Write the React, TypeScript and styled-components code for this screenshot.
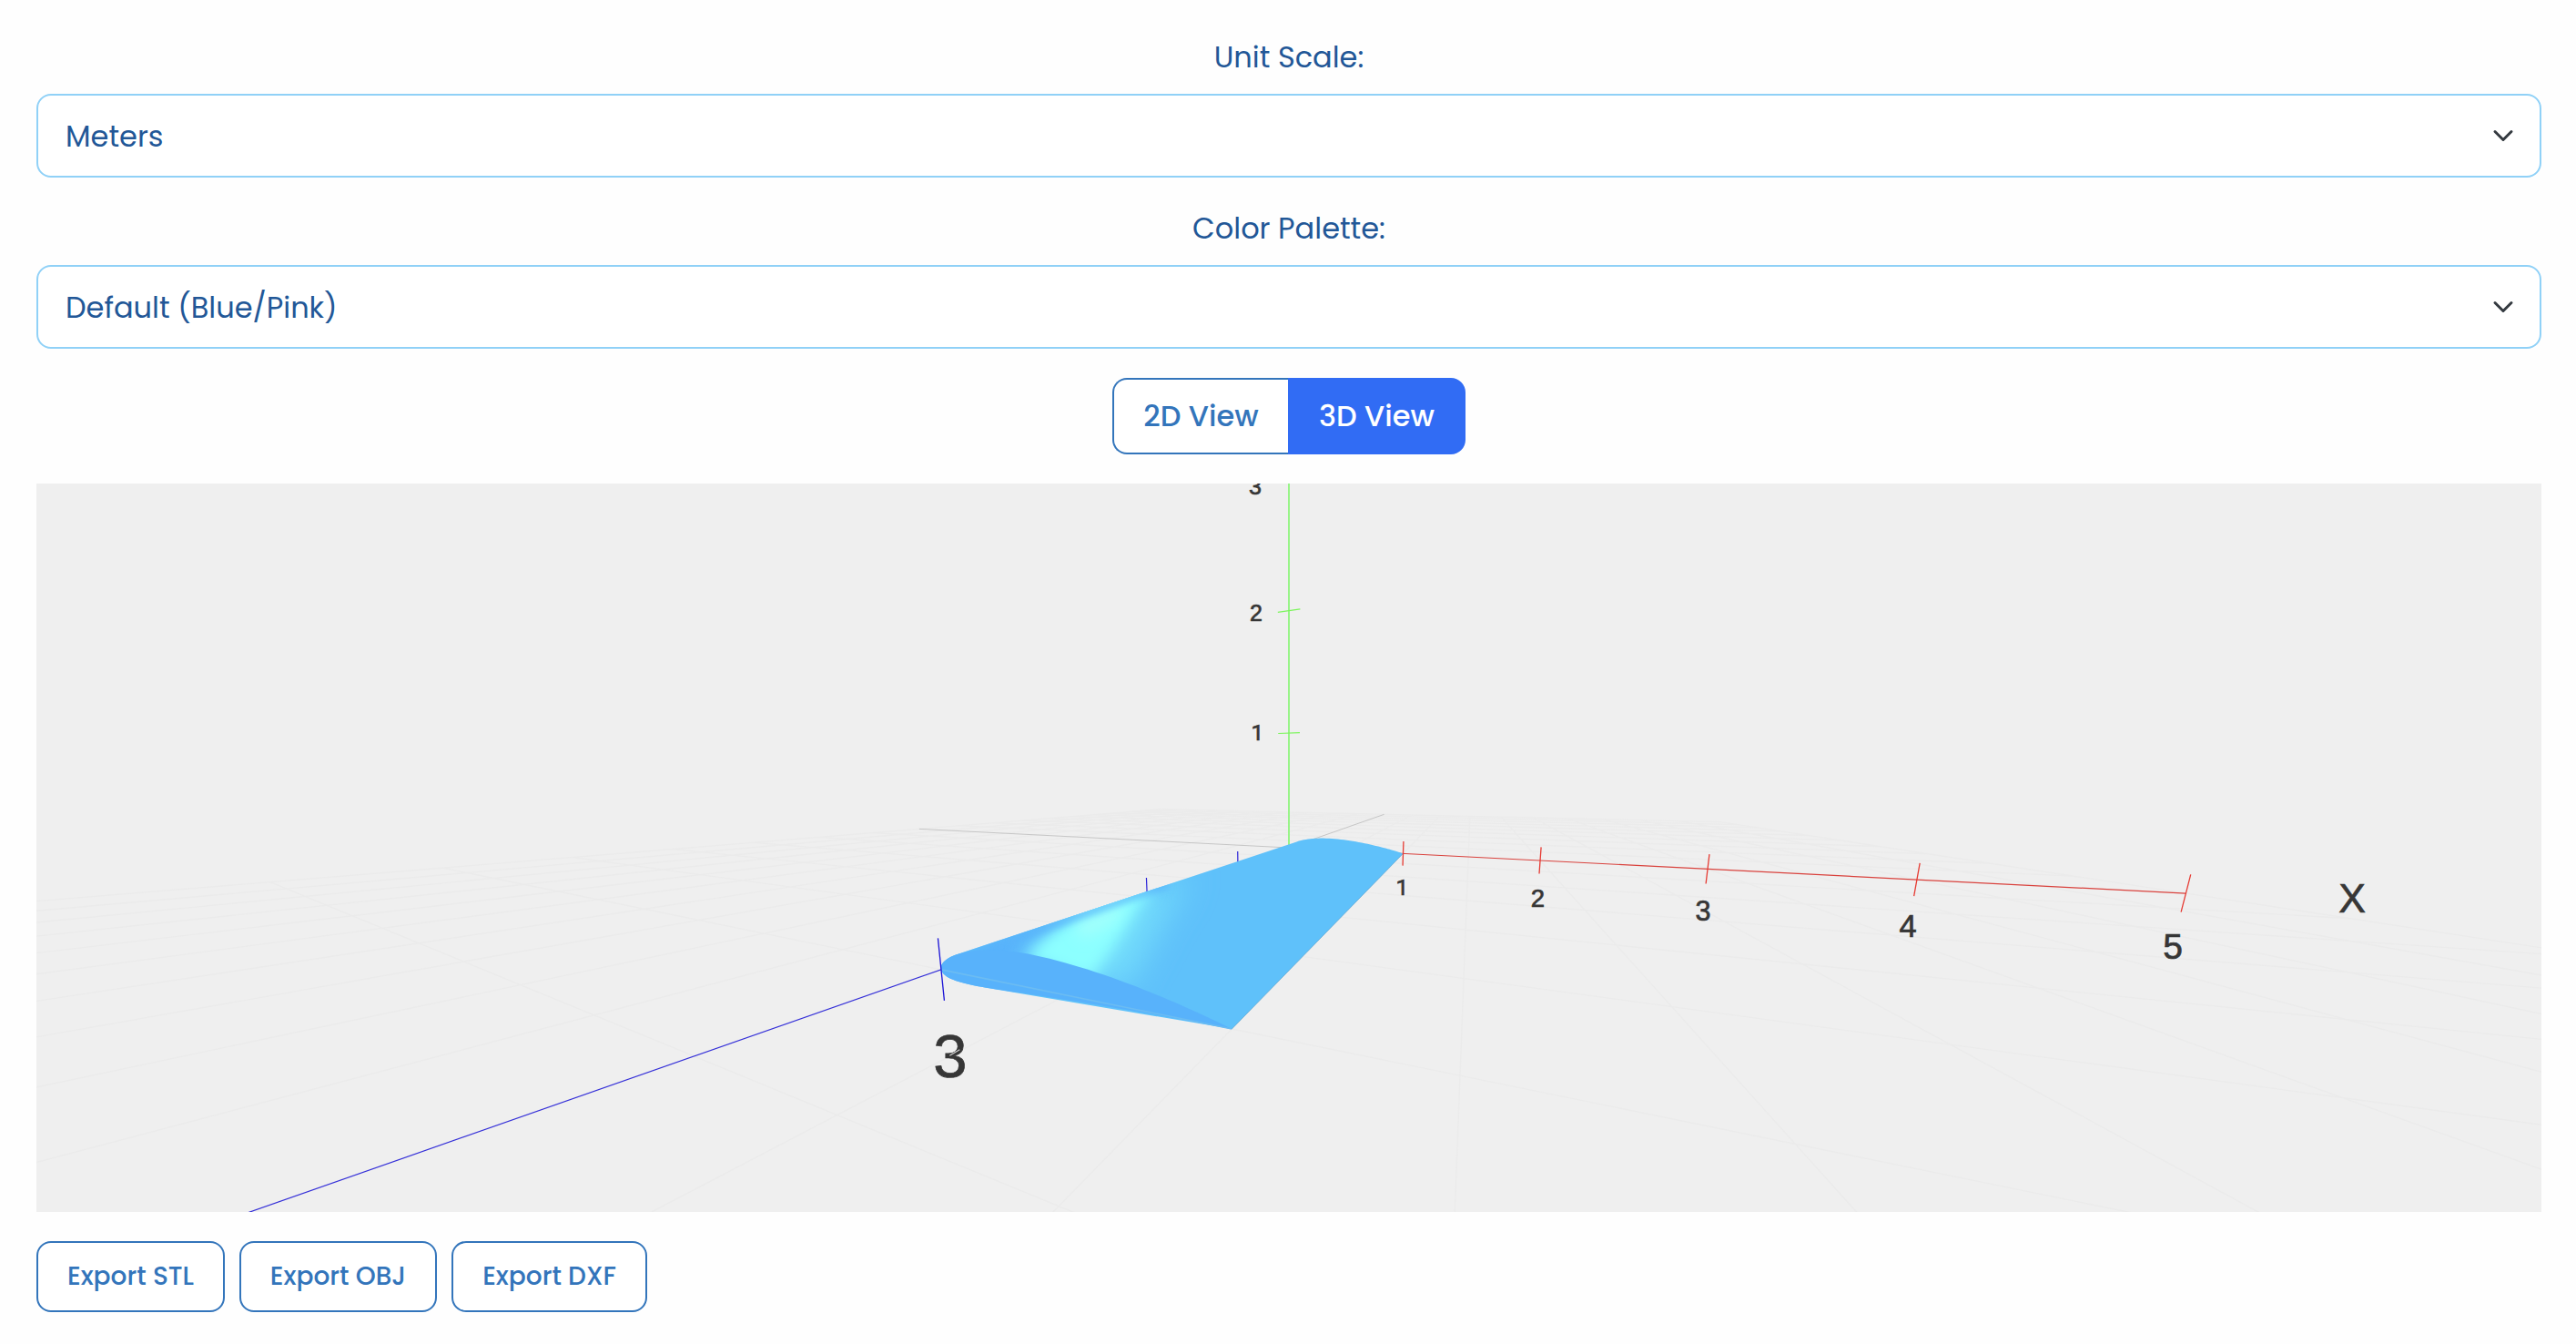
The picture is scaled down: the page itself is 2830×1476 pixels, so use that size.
import React from "react";
import styled, { createGlobalStyle } from "styled-components";

const GlobalStyle = createGlobalStyle`
  *, *::before, *::after { box-sizing: border-box; }
  body {
    margin: 0;
    background: #fefefe;
    color: #225797;
    font-family: Poppins, Inter, "Open Sans", sans-serif;
  }
`;

const Page = styled.main`
  display: flex;
  flex-direction: column;
  min-height: 1476px;
  padding: 39px 38px 35px 40px;
`;

const Field = styled.label`
  display: flex;
  flex-direction: column;
  gap: 16px;
  margin-bottom: 32px;
`;

const FieldLabel = styled.span`
  height: 48px;
  line-height: 48px;
  text-align: center;
  font-size: 32px;
`;

const SelectFrame = styled.span`
  display: grid;
  grid-template-columns: 1fr 24px;
  align-items: center;
  height: 92px;
  padding-right: 28px;
  border: 2px solid #90d1f7;
  border-radius: 16px;
  background: #fff;
`;

const Select = styled.select`
  grid-column: 1 / 3;
  grid-row: 1;
  height: 88px;
  padding: 0 0 0 30px;
  border: 0;
  appearance: none;
  background: transparent;
  color: #225797;
  font: inherit;
  font-size: 32px;
`;

const Chevron = styled.svg`
  grid-column: 2;
  grid-row: 1;
  width: 24px;
  height: 24px;
  pointer-events: none;
`;

const Toggle = styled.div`
  display: flex;
  align-self: center;
  width: 388px;
  height: 84px;
  margin-bottom: 32px;
`;

const ToggleButton = styled.button<{ $active?: boolean }>`
  flex: ${(p) => (p.$active ? "0 0 195px" : "0 0 193px")};
  padding: 0;
  border: 2px solid ${(p) => (p.$active ? "#316cf4" : "#3375bb")};
  border-radius: ${(p) => (p.$active ? "0 16px 16px 0" : "16px 0 0 16px")};
  border-right-width: ${(p) => (p.$active ? "2px" : "0")};
  background: ${(p) => (p.$active ? "#316cf4" : "#fff")};
  color: ${(p) => (p.$active ? "#fff" : "#3375bb")};
  font: inherit;
  font-size: 32px;
  font-weight: 500;
`;

const Viewport = styled.svg`
  display: block;
  width: 2752px;
  height: 800px;
  margin-bottom: 32px;
  background: #efefef;
`;

const Exports = styled.div`
  display: flex;
  gap: 16px;
`;

const ExportButton = styled.button<{ $width: number }>`
  width: ${(p) => p.$width}px;
  height: 78px;
  padding: 0;
  border: 2px solid #3375bb;
  border-radius: 16px;
  background: #fff;
  color: #3375bb;
  font: inherit;
  font-size: 28px;
  font-weight: 500;
`;

/* ---- camera: looks at the origin, 75 degree field of view ---- */

type Vec3 = [number, number, number];
type Pt = [number, number];

const WIDTH = 2752;
const HEIGHT = 800;
const DISTANCE = 4.235;
const DIR: Vec3 = [0.3526, 0.1334, 0.9262];
const FOCAL = HEIGHT / 2 / Math.tan((37.5 * Math.PI) / 180);
const H = Math.hypot(DIR[0], DIR[2]);

const depth = ([x, y, z]: Vec3) => DISTANCE - (x * DIR[0] + y * DIR[1] + z * DIR[2]);

function project(p: Vec3): Pt {
  const [x, y, z] = p;
  const d = depth(p);
  const right = (x * DIR[2] - z * DIR[0]) / H;
  const up = y * H - (DIR[1] / H) * (x * DIR[0] + z * DIR[2]);
  return [WIDTH / 2 + (FOCAL * right) / d, HEIGHT / 2 - (FOCAL * up) / d];
}

function clipNear(from: Vec3, to: Vec3): Vec3 {
  const near = 0.1;
  const a = depth(from);
  const b = depth(to);
  if (b >= near) return to;
  const t = (a - near) / (a - b);
  return from.map((v, i) => v + (to[i] - v) * t) as Vec3;
}

const fmt = (p: Pt) => `${p[0].toFixed(2)} ${p[1].toFixed(2)}`;

function segment(a: Vec3, b: Vec3): string {
  if (depth(a) < 0.1 && depth(b) < 0.1) return "";
  const start = depth(a) < 0.1 ? clipNear(b, a) : a;
  const end = clipNear(start, b);
  return `M${fmt(project(start))}L${fmt(project(end))}`;
}

const polygon = (pts: Pt[]) => `M${pts.map(fmt).join("L")}Z`;

/* ---- floor grid: 10 units wide, half-unit cells ---- */

const gridSteps = Array.from({ length: 21 }, (_, i) => -5 + i * 0.5).filter((v) => v !== 0);
const gridPath = gridSteps
  .map((v) => segment([v, 0, -5], [v, 0, 5]) + segment([-5, 0, v], [5, 0, v]))
  .join("");

/* ---- wing: NACA 4412, unit chord, span of 3 ---- */

function naca(m: number, p: number, t: number, steps: number): Pt[] {
  const upper: Pt[] = [];
  const lower: Pt[] = [];
  for (let i = 0; i <= steps; i++) {
    const x = (1 - Math.cos((Math.PI * i) / steps)) / 2;
    const yt =
      5 * t * (0.2969 * Math.sqrt(x) - 0.126 * x - 0.3516 * x ** 2 + 0.2843 * x ** 3 - 0.1036 * x ** 4);
    const ahead = x < p;
    const q = ahead ? p * p : (1 - p) ** 2;
    const yc = ahead ? (m / q) * (2 * p * x - x * x) : (m / q) * (1 - 2 * p + 2 * p * x - x * x);
    const a = Math.atan(((2 * m) / q) * (p - x));
    upper.push([x - yt * Math.sin(a), yc + yt * Math.cos(a)]);
    lower.push([x + yt * Math.sin(a), yc - yt * Math.cos(a)]);
  }
  return [...upper.reverse(), ...lower.slice(1)];
}

function hull(points: Pt[]): Pt[] {
  const s = [...points].sort((a, b) => a[0] - b[0] || a[1] - b[1]);
  const cross = (o: Pt, a: Pt, b: Pt) => (a[0] - o[0]) * (b[1] - o[1]) - (a[1] - o[1]) * (b[0] - o[0]);
  const half = (list: Pt[]) => {
    const out: Pt[] = [];
    for (const p of list) {
      while (out.length > 1 && cross(out[out.length - 2], out[out.length - 1], p) <= 0) out.pop();
      out.push(p);
    }
    return out.slice(0, -1);
  };
  return [...half(s), ...half(s.reverse())];
}

const profile = naca(0.04, 0.4, 0.12, 60);
const rib = (z: number) => profile.map(([x, y]) => project([x, y, z]));
const tipPath = polygon(rib(3));
const wingPath = polygon(hull([...rib(0), ...rib(3)]));

const redTicks = [1, 2, 3, 4, 5].map((v) => segment([v, -0.1, 0], [v, 0.1, 0])).join("");
const greenTicks = [1, 2, 3].map((v) => segment([-0.1, v, 0], [0.1, v, 0])).join("");
const hiddenBlueTicks = [1, 2].map((v) => segment([0, -0.1, v], [0, 0.1, v])).join("");

const SANS = '"Liberation Sans", Arial, sans-serif';
const FOOTLESS = 'Roboto, "Liberation Sans", sans-serif';

const labels: { text: string; x: number; y: number; size: number; font?: string }[] = [
  { text: "3", x: 1339, y: 11.5, size: 25 },
  { text: "2", x: 1340, y: 151, size: 25 },
  { text: "1", x: 1341.5, y: 282, size: 24.5, font: FOOTLESS },
  { text: "1", x: 1500.5, y: 451.7, size: 24.5, font: FOOTLESS },
  { text: "2", x: 1649.5, y: 465, size: 27.5 },
  { text: "3", x: 1831, y: 479.5, size: 30.5 },
  { text: "4", x: 2056, y: 498, size: 34.5 },
  { text: "5", x: 2347, y: 521.5, size: 39 },
  { text: "X", x: 2544, y: 471, size: 44.5 },
  { text: "3", x: 1004, y: 652, size: 67 },
];

function WingScene() {
  return (
    <Viewport viewBox="0 0 2752 800" role="img" aria-label="Wing 3D view">
      <defs>
        <clipPath id="wing-clip">
          <path d={wingPath} />
        </clipPath>
        <filter id="soft-wide" x="-50%" y="-50%" width="200%" height="200%">
          <feGaussianBlur stdDeviation="17" />
        </filter>
        <filter id="soft" x="-50%" y="-50%" width="200%" height="200%">
          <feGaussianBlur stdDeviation="8" />
        </filter>
        <filter id="soft-tight" filterUnits="userSpaceOnUse" x="900" y="360" width="560" height="280">
          <feGaussianBlur stdDeviation="4" />
        </filter>
      </defs>
      <g fill="none" strokeWidth="1">
        <path d={gridPath} stroke="#ebebeb" strokeWidth="1.4" />
        <path d={segment([-5, 0, 0], [0, 0, 0]) + segment([0, 0, -5], [0, 0, 0])} stroke="#c6c6c6" />
        <path d={segment([0, 5, 0], [0, 0, 0])} stroke="#98f488" strokeWidth="2" />
        <path d={greenTicks} stroke="#7cf55c" strokeWidth="1.2" />
        <path d={hiddenBlueTicks} stroke="#2a22d8" strokeWidth="1.2" />
        <path d={segment([0, 0, 0], [5, 0, 0])} stroke="#d9423d" strokeWidth="1.2" />
        <path d={segment([0, 0, 2.9], [0, 0, 5])} stroke="#3530d8" strokeWidth="1.2" />
      </g>
      <path d={wingPath} fill="#5fc1fa" />
      <g clipPath="url(#wing-clip)">
        <path d="M980 545L1060 498L1170 458L1240 434L1235 455L1160 485L1100 520Z" fill="#56b0fb" filter="url(#soft)" />
        <path d="M1080 520L1140 478L1208 450L1268 430L1238 478L1200 550L1130 550Z" fill="#72dcfb" filter="url(#soft-wide)" />
        <path d="M1086 520L1122 488L1160 465L1200 448L1230 443L1208 470L1186 505L1158 545Z" fill="#8cffff" filter="url(#soft)" />
        <path d="M1140 482L1200 456L1184 482L1150 500Z" fill="#a2fffc" filter="url(#soft)" />
        <path d="M985 532L1243 440" stroke="#58b3fa" strokeWidth="6" fill="none" filter="url(#soft-tight)" />
      </g>
      <path d={segment([1, 0, 3], [1, 0, 0])} stroke="#4a9ccc" strokeWidth="1" opacity="0.6" />
      <path d={tipPath} fill="#58b2fb" />
      <path d={segment([0, 0, 3], [1, 0, 3])} stroke="#6bbcf3" strokeWidth="1.6" />
      <path d={redTicks} stroke="#e63a32" strokeWidth="1.3" />
      <path d={segment([0, -0.1, 3], [0, 0.1, 3])} stroke="#1a12d6" strokeWidth="1.3" />
      <g fill="#363636" stroke="#363636" strokeWidth="0.7" textAnchor="middle">
        {labels.map((l, i) => (
          <text key={i} x={l.x} y={l.y} fontSize={l.size} fontFamily={l.font ?? SANS}>
            {l.text}
          </text>
        ))}
      </g>
      <path d="M1003.3 628.3L1014.3 621.7" stroke="#d0d0d0" strokeWidth="1.2" />
    </Viewport>
  );
}

function Picker({ label, value }: { label: string; value: string }) {
  return (
    <Field>
      <FieldLabel>{label}</FieldLabel>
      <SelectFrame>
        <Select defaultValue={value}>
          <option>{value}</option>
        </Select>
        <Chevron viewBox="0 0 16 16" fill="none" stroke="#343a40" strokeWidth="2" strokeLinecap="round" strokeLinejoin="round">
          <path d="m2 5 6 6 6-6" />
        </Chevron>
      </SelectFrame>
    </Field>
  );
}

export default function App() {
  return (
    <>
      <GlobalStyle />
      <Page>
        <Picker label="Unit Scale:" value="Meters" />
        <Picker label="Color Palette:" value="Default (Blue/Pink)" />
        <Toggle>
          <ToggleButton>2D View</ToggleButton>
          <ToggleButton $active>3D View</ToggleButton>
        </Toggle>
        <WingScene />
        <Exports>
          <ExportButton $width={207}>Export STL</ExportButton>
          <ExportButton $width={217}>Export OBJ</ExportButton>
          <ExportButton $width={215}>Export DXF</ExportButton>
        </Exports>
      </Page>
    </>
  );
}
